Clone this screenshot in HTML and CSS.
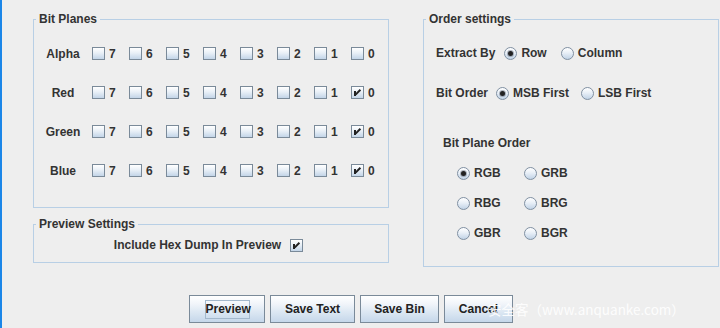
FILE: index.html
```html
<!DOCTYPE html>
<html>
<head>
<meta charset="utf-8">
<title>Extract</title>
<link rel="stylesheet" href="styles.css">
</head>
<body>
<div class="window">
  <div class="main">
    <div class="left">
      <fieldset class="group bitplanes">
        <legend>Bit Planes</legend>
        <div class="plane-grid">
          <span class="plane-label">Alpha</span>
          <span class="bit"><span class="cb"></span>7</span>
          <span class="bit"><span class="cb"></span>6</span>
          <span class="bit"><span class="cb"></span>5</span>
          <span class="bit"><span class="cb"></span>4</span>
          <span class="bit"><span class="cb"></span>3</span>
          <span class="bit"><span class="cb"></span>2</span>
          <span class="bit"><span class="cb"></span>1</span>
          <span class="bit"><span class="cb"></span>0</span>

          <span class="plane-label">Red</span>
          <span class="bit"><span class="cb"></span>7</span>
          <span class="bit"><span class="cb"></span>6</span>
          <span class="bit"><span class="cb"></span>5</span>
          <span class="bit"><span class="cb"></span>4</span>
          <span class="bit"><span class="cb"></span>3</span>
          <span class="bit"><span class="cb"></span>2</span>
          <span class="bit"><span class="cb"></span>1</span>
          <span class="bit"><span class="cb"><svg class="check" width="11" height="11" viewBox="1 1 11 11"><rect x="3" y="5" width="2" height="5" fill="#222"/><path d="M4.6 8.6 L9.4 3.8" stroke="#222" stroke-width="2" fill="none"/></svg></span>0</span>

          <span class="plane-label">Green</span>
          <span class="bit"><span class="cb"></span>7</span>
          <span class="bit"><span class="cb"></span>6</span>
          <span class="bit"><span class="cb"></span>5</span>
          <span class="bit"><span class="cb"></span>4</span>
          <span class="bit"><span class="cb"></span>3</span>
          <span class="bit"><span class="cb"></span>2</span>
          <span class="bit"><span class="cb"></span>1</span>
          <span class="bit"><span class="cb"><svg class="check" width="11" height="11" viewBox="1 1 11 11"><rect x="3" y="5" width="2" height="5" fill="#222"/><path d="M4.6 8.6 L9.4 3.8" stroke="#222" stroke-width="2" fill="none"/></svg></span>0</span>

          <span class="plane-label">Blue</span>
          <span class="bit"><span class="cb"></span>7</span>
          <span class="bit"><span class="cb"></span>6</span>
          <span class="bit"><span class="cb"></span>5</span>
          <span class="bit"><span class="cb"></span>4</span>
          <span class="bit"><span class="cb"></span>3</span>
          <span class="bit"><span class="cb"></span>2</span>
          <span class="bit"><span class="cb"></span>1</span>
          <span class="bit"><span class="cb"><svg class="check" width="11" height="11" viewBox="1 1 11 11"><rect x="3" y="5" width="2" height="5" fill="#222"/><path d="M4.6 8.6 L9.4 3.8" stroke="#222" stroke-width="2" fill="none"/></svg></span>0</span>
        </div>
      </fieldset>

      <fieldset class="group preview">
        <legend>Preview Settings</legend>
        <div class="hex-row">
          <span>Include Hex Dump In Preview</span>
          <span class="cb"><svg class="check" width="11" height="11" viewBox="1 1 11 11"><rect x="3" y="5" width="2" height="5" fill="#222"/><path d="M4.6 8.6 L9.4 3.8" stroke="#222" stroke-width="2" fill="none"/></svg></span>
        </div>
      </fieldset>
    </div>

    <fieldset class="group order">
      <legend>Order settings</legend>
      <div class="opt-row extract">
        <span class="opt-label">Extract By</span>
        <span class="radio"><span class="rb on"></span>Row</span>
        <span class="radio"><span class="rb"></span>Column</span>
      </div>
      <div class="opt-row bitorder">
        <span class="opt-label">Bit Order</span>
        <span class="radio"><span class="rb on"></span>MSB First</span>
        <span class="radio"><span class="rb"></span>LSB First</span>
      </div>
      <div class="plane-order-title">Bit Plane Order</div>
      <div class="plane-order">
        <span class="radio"><span class="rb on"></span>RGB</span>
        <span class="radio"><span class="rb"></span>GRB</span>
        <span class="radio"><span class="rb"></span>RBG</span>
        <span class="radio"><span class="rb"></span>BRG</span>
        <span class="radio"><span class="rb"></span>GBR</span>
        <span class="radio"><span class="rb"></span>BGR</span>
      </div>
    </fieldset>
  </div>

  <div class="buttons">
    <button class="btn btn-preview"><span class="focus">Preview</span></button>
    <button class="btn btn-savetext">Save Text</button>
    <button class="btn btn-savebin">Save Bin</button>
    <button class="btn btn-cancel">Cancel</button>
  </div>

  <div class="watermark">安全客（www.anquanke.com）</div>
</div>
</body>
</html>
```

FILE: styles.css
```css
* { box-sizing: border-box; }

html, body {
  margin: 0;
  padding: 0;
}

body {
  width: 720px;
  height: 328px;
  overflow: hidden;
  background: #eeeeee;
  font: bold 12px "Liberation Sans", Arial, sans-serif;
  color: #333333;
}

.window {
  position: relative;
  height: 328px;
  border-left: 2px solid #1b86e8;
}

.main {
  display: flex;
  align-items: flex-start;
  padding: 12px 0 0 31px;
}

.left {
  width: 356px;
  display: flex;
  flex-direction: column;
}

.group {
  margin: 0;
  padding: 0;
  min-width: 0;
  border: 1px solid #b8cfe5;
}

.group legend {
  margin-left: 2px;
  padding: 0 3px;
  line-height: 14px;
  font-size: 12px;
}

/* Bit planes */
.bitplanes {
  padding-bottom: 17px;
}

.plane-grid {
  display: grid;
  grid-template-columns: 52px repeat(8, 37px);
  grid-auto-rows: 39px;
  align-items: center;
  margin: 8px 0 0 6px;
}

.plane-label {
  padding-right: 6px;
  text-align: center;
}

.bit {
  display: flex;
  align-items: center;
  gap: 4px;
}

.cb {
  display: inline-flex;
  width: 13px;
  height: 13px;
  flex: none;
  border: 1px solid #7a8a99;
  background: linear-gradient(to bottom, #ffffff 0%, #e9f0f7 45%, #c3d5e8 100%);
}

.check {
  display: block;
}

/* Preview settings */
.preview {
  margin-top: 9px;
  padding-bottom: 9px;
}

.hex-row {
  display: flex;
  justify-content: center;
  align-items: center;
  gap: 9px;
  height: 16px;
  margin-top: 6px;
  padding-right: 5px;
}

/* Order settings */
.order {
  width: 296px;
  margin-left: 34px;
  padding-bottom: 18px;
}

.opt-row {
  display: flex;
  align-items: center;
  height: 20px;
  margin-left: 12px;
}

.extract { margin-top: 17px; }
.bitorder { margin-top: 20px; }

.opt-label {
  margin-right: 9px;
}

.bitorder .opt-label {
  margin-right: 8px;
}

.radio {
  display: inline-flex;
  align-items: center;
  gap: 4px;
  margin-right: 14px;
}

.bitorder .radio {
  margin-right: 12px;
}

.rb {
  display: inline-flex;
  align-items: center;
  justify-content: center;
  width: 13px;
  height: 13px;
  flex: none;
  border-radius: 50%;
  border: 1px solid #8090a2;
  background: linear-gradient(to bottom, #ffffff 0%, #e8eff7 45%, #c1d3e6 100%);
}

.rb.on::after {
  content: "";
  width: 5px;
  height: 5px;
  border-radius: 50%;
  background: #222222;
  box-shadow: 0 0 0 1px rgba(90, 100, 115, 0.45);
}

.plane-order-title {
  margin: 32px 0 0 19px;
  line-height: 16px;
}

.plane-order {
  display: grid;
  grid-template-columns: 67px 67px;
  grid-auto-rows: 30px;
  align-items: center;
  margin: 7px 0 0 33px;
}

/* Buttons */
.buttons {
  display: flex;
  gap: 5px;
  margin: 28px 0 0 187px;
}

.btn {
  display: flex;
  align-items: center;
  justify-content: center;
  height: 28px;
  padding: 0;
  margin: 0;
  border: 1px solid #7a8a99;
  border-radius: 0;
  background: linear-gradient(to bottom, #ffffff 0%, #f1f5fa 30%, #dde8f3 60%, #c5d7ea 100%);
  font: bold 12px "Liberation Sans", Arial, sans-serif;
  color: #222222;
}

.btn-preview { width: 76px; }
.btn-savetext { width: 85px; }
.btn-savebin { width: 79px; }
.btn-cancel { width: 69px; }

.focus {
  display: inline-block;
  border: 1px solid #a3b8cc;
  padding: 1px 0;
  line-height: 15px;
  width: 45px;
  text-align: center;
}

.watermark {
  position: absolute;
  left: 486px;
  top: 299px;
  font: normal 13.5px "Noto Sans CJK SC", sans-serif;
  line-height: 20px;
  color: rgba(255, 255, 255, 0.9);
  white-space: nowrap;
}
```
